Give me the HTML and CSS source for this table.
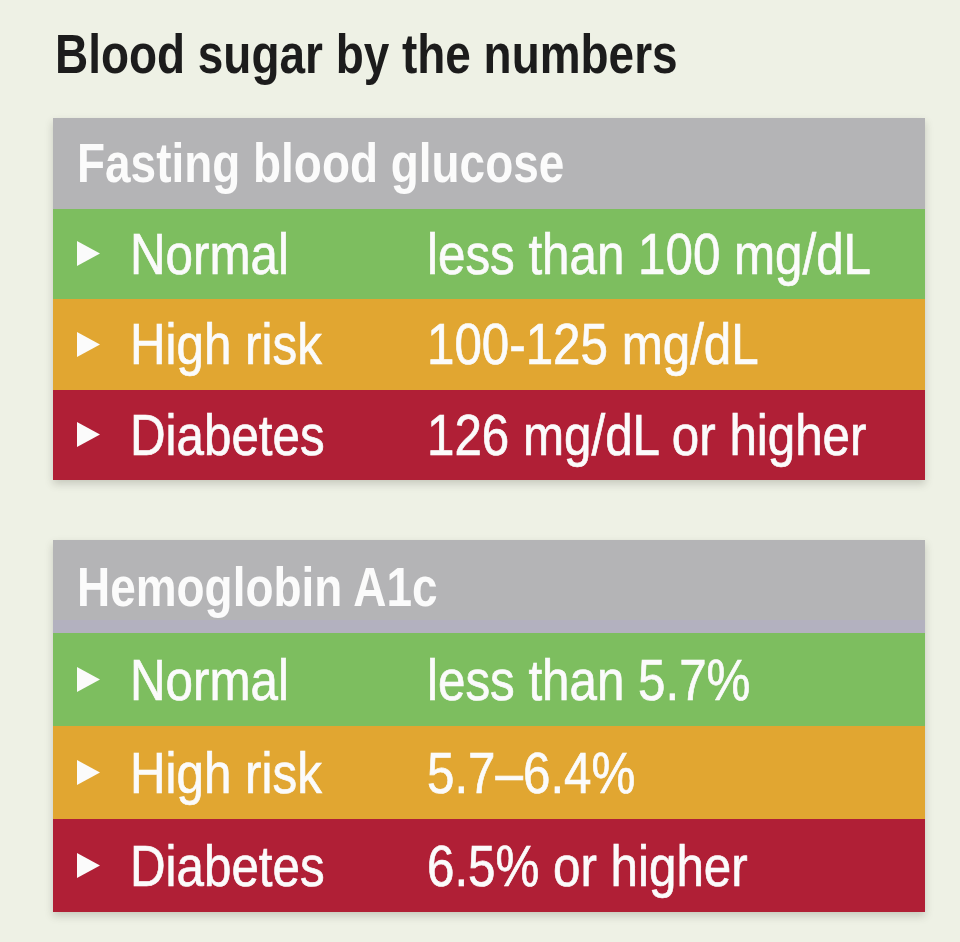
FILE: index.html
```html
<!DOCTYPE html>
<html lang="en">
<head>
<meta charset="utf-8">
<title>Blood sugar by the numbers</title>
<link rel="stylesheet" href="styles.css">
</head>
<body>
<main class="page">
  <h1 class="title">Blood sugar by the numbers</h1>

  <section class="panel panel-a">
    <div class="row head"><span class="txt">Fasting blood glucose</span></div>
    <div class="row normal">
      <svg class="tri" viewBox="0 0 24 26"><polygon points="0,0 24,13 0,26"/></svg>
      <span class="label"><span class="txt">Normal</span></span>
      <span class="value"><span class="txt">less than 100 mg/dL</span></span>
    </div>
    <div class="row risk">
      <svg class="tri" viewBox="0 0 24 26"><polygon points="0,0 24,13 0,26"/></svg>
      <span class="label"><span class="txt">High risk</span></span>
      <span class="value"><span class="txt">100-125 mg/dL</span></span>
    </div>
    <div class="row diab">
      <svg class="tri" viewBox="0 0 24 26"><polygon points="0,0 24,13 0,26"/></svg>
      <span class="label"><span class="txt">Diabetes</span></span>
      <span class="value"><span class="txt">126 mg/dL or higher</span></span>
    </div>
  </section>

  <section class="panel panel-b">
    <div class="row head"><span class="txt">Hemoglobin A1c</span></div>
    <div class="row normal">
      <svg class="tri" viewBox="0 0 24 26"><polygon points="0,0 24,13 0,26"/></svg>
      <span class="label"><span class="txt">Normal</span></span>
      <span class="value"><span class="txt">less than 5.7%</span></span>
    </div>
    <div class="row risk">
      <svg class="tri" viewBox="0 0 24 26"><polygon points="0,0 24,13 0,26"/></svg>
      <span class="label"><span class="txt">High risk</span></span>
      <span class="value"><span class="txt">5.7–6.4%</span></span>
    </div>
    <div class="row diab">
      <svg class="tri" viewBox="0 0 24 26"><polygon points="0,0 24,13 0,26"/></svg>
      <span class="label"><span class="txt">Diabetes</span></span>
      <span class="value"><span class="txt">6.5% or higher</span></span>
    </div>
  </section>
</main>
</body>
</html>
```

FILE: styles.css
```css
html, body {
  margin: 0;
  padding: 0;
}

body {
  background: #eef1e5;
  width: 960px;
  height: 942px;
  overflow: hidden;
  font-family: "Liberation Sans", Arial, sans-serif;
}

.page {
  padding: 26px 35px 0 53px;
  display: flex;
  flex-direction: column;
}

.title {
  margin: 0 0 36px 2px;
  font-size: 56px;
  line-height: 56px;
  font-weight: 700;
  color: #1c1c1c;
  white-space: nowrap;
  transform: scaleX(0.82);
  transform-origin: left center;
}

.panel {
  display: flex;
  flex-direction: column;
  box-shadow: 0 4px 8px rgba(60, 60, 50, 0.22);
}

.panel-a {
  margin-bottom: 60px;
}

.row {
  display: flex;
  align-items: center;
  padding-left: 24px;
  color: #fbfbfb;
  font-size: 57px;
  line-height: 56px;
  white-space: nowrap;
  -webkit-text-stroke: 0.7px #fbfbfb;
}

.panel-a .row { height: 90.5px; }
.panel-b .row { height: 93px; }

.txt {
  display: inline-block;
  transform: scaleX(0.865);
  transform-origin: left center;
}

.row.head {
  background: #b4b4b6;
  font-size: 56px;
  font-weight: 700;
  -webkit-text-stroke: 0;
}

.row.head .txt {
  transform: scaleX(0.82);
}

.panel-b .row.head {
  background: linear-gradient(#b4b4b6 0, #b4b4b6 86%, #b3b1bf 86%, #b3b1bf 100%);
}

.row.normal { background: #7dbe5f; }
.row.risk   { background: #e1a631; }
.row.diab   { background: #b01f36; }

.tri {
  width: 23px;
  height: 25px;
  flex: none;
  margin-right: 30px;
  fill: #fbfbfb;
}

.label {
  width: 297px;
  flex: none;
}
```
